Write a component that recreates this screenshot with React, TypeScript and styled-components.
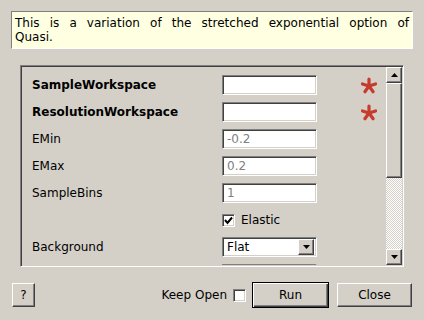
import styled, { createGlobalStyle } from "styled-components";

const GlobalStyle = createGlobalStyle`
  html, body {
    margin: 0;
    padding: 0;
    background: #d4d0c8;
  }
  body {
    font-family: "DejaVu Sans", "Liberation Sans", sans-serif;
    font-size: 12px;
    color: #000;
  }
`;

const Dialog = styled.div`
  width: 424px;
  height: 320px;
  display: flex;
  flex-direction: column;
  background: #d4d0c8;
  overflow: hidden;
`;

const Description = styled.div`
  margin: 11px 11px 0;
  height: 38px;
  box-sizing: border-box;
  padding: 4px 3px 0 3px;
  background: #ffffe1;
  border: 1px solid;
  border-color: #808080 #ffffff #ffffff #808080;
  line-height: 14px;
  text-align: justify;
`;

const LastLine = styled.span`
  display: inline-block;
  width: 100%;
`;

const Frame = styled.div`
  margin: 16px 20px 0;
  height: 202px;
  box-sizing: border-box;
  border: 1px solid;
  border-color: #808080 #ffffff #ffffff #808080;
  box-shadow: inset 1px 1px #404040, inset -1px -1px #d4d0c8;
  padding: 1px;
  display: flex;
  overflow: hidden;
`;

const Form = styled.div`
  flex: 1;
  display: grid;
  grid-template-columns: 190px 95px 1fr;
  grid-auto-rows: 20px;
  row-gap: 7px;
  align-items: center;
  padding: 8px 0 0 10px;
  overflow: hidden;
`;

const Label = styled.span<{ $bold?: boolean }>`
  font-weight: ${(p) => (p.$bold ? "bold" : "normal")};
  white-space: nowrap;
`;

const sunken = `
  border: 1px solid;
  border-color: #808080 #ffffff #ffffff #808080;
  box-shadow: inset 1px 1px #404040, inset -1px -1px #d4d0c8;
`;

const Input = styled.div<{ $muted?: boolean }>`
  ${sunken}
  box-sizing: border-box;
  height: 20px;
  width: 95px;
  background: #fff;
  padding: 0 4px;
  display: flex;
  align-items: center;
  color: ${(p) => (p.$muted ? "#808080" : "#000")};
`;

const Combo = styled(Input)`
  padding: 2px 2px 2px 4px;
  justify-content: space-between;
`;

const raised = `
  border: 1px solid;
  border-color: #ffffff #404040 #404040 #ffffff;
  box-shadow: inset -1px -1px #808080, inset 1px 1px #d4d0c8;
  background: #d4d0c8;
`;

const ArrowButton = styled.div`
  ${raised}
  box-sizing: border-box;
  width: 16px;
  height: 16px;
  display: flex;
  align-items: center;
  justify-content: center;
  flex-shrink: 0;
  margin-left: auto;
`;

const Star = styled.svg`
  justify-self: end;
  margin-right: 9px;
`;

const CheckRow = styled.label`
  display: flex;
  align-items: center;
  gap: 6px;
`;

const Box = styled.span`
  ${sunken}
  box-sizing: border-box;
  width: 13px;
  height: 13px;
  background: #fff;
  display: inline-flex;
  align-items: center;
  justify-content: center;
`;

const ScrollBar = styled.div`
  width: 16px;
  display: flex;
  flex-direction: column;
  flex-shrink: 0;
`;

const Thumb = styled.div`
  ${raised}
  box-sizing: border-box;
  height: 95px;
`;

const Trough = styled.div`
  flex: 1;
  background-image: conic-gradient(#ffffff 25%, #d4d0c8 0 50%, #ffffff 0 75%, #d4d0c8 0);
  background-size: 2px 2px;
`;

const Footer = styled.div`
  margin-top: 15px;
  padding: 0 12px;
  height: 26px;
  display: flex;
  align-items: center;
`;

const Button = styled.button<{ $w: number; $default?: boolean }>`
  ${raised}
  box-sizing: border-box;
  width: ${(p) => p.$w}px;
  height: ${(p) => (p.$default ? 26 : 24)}px;
  font: inherit;
  color: #000;
  padding: 0;
  ${(p) =>
    p.$default &&
    `
    border-color: #000;
    box-shadow: inset 1px 1px #ffffff, inset -1px -1px #404040, inset -2px -2px #808080;
  `}
`;

const KeepOpen = styled.label`
  margin-left: auto;
  margin-right: 6px;
  display: flex;
  align-items: center;
  gap: 6px;
`;

const Spacer = styled.div`
  width: 8px;
`;

const Arrow = ({ up }: { up?: boolean }) => (
  <svg width="7" height="4" viewBox="0 0 7 4">
    <polygon points={up ? "0,4 7,4 3.5,0" : "0,0 7,0 3.5,4"} fill="#000" />
  </svg>
);

const Asterisk = () => (
  <Star width="16" height="17" viewBox="0 0 16 17">
    <g stroke="#c63b2c" strokeWidth="3.2" strokeLinecap="round">
      <line x1="8" y1="9" x2="8" y2="2" />
      <line x1="8" y1="9" x2="14.6" y2="6.9" />
      <line x1="8" y1="9" x2="1.4" y2="6.9" />
      <line x1="8" y1="9" x2="12.1" y2="14.7" />
      <line x1="8" y1="9" x2="3.9" y2="14.7" />
    </g>
  </Star>
);

function App() {
  return (
    <Dialog>
      <GlobalStyle />
      <Description>
        This is a variation of the stretched exponential option of{" "}
        <LastLine>Quasi.</LastLine>
      </Description>
      <Frame>
        <Form>
          <Label $bold>SampleWorkspace</Label>
          <Input />
          <Asterisk />

          <Label $bold>ResolutionWorkspace</Label>
          <Input />
          <Asterisk />

          <Label>EMin</Label>
          <Input $muted>-0.2</Input>
          <span />

          <Label>EMax</Label>
          <Input $muted>0.2</Input>
          <span />

          <Label>SampleBins</Label>
          <Input $muted>1</Input>
          <span />

          <span />
          <CheckRow>
            <Box>
              <svg width="9" height="9" viewBox="0 0 9 9">
                <polyline points="1,4 3.5,7 8,1.5" fill="none" stroke="#000" strokeWidth="2" />
              </svg>
            </Box>
            Elastic
          </CheckRow>
          <span />

          <Label>Background</Label>
          <Combo>
            Flat
            <ArrowButton>
              <Arrow />
            </ArrowButton>
          </Combo>
          <span />

          <span />
          <Combo>
            <ArrowButton>
              <Arrow />
            </ArrowButton>
          </Combo>
          <span />
        </Form>
        <ScrollBar>
          <ArrowButton>
            <Arrow up />
          </ArrowButton>
          <Thumb />
          <Trough />
          <ArrowButton>
            <Arrow />
          </ArrowButton>
        </ScrollBar>
      </Frame>
      <Footer>
        <Button $w={23}>?</Button>
        <KeepOpen>
          Keep Open
          <Box />
        </KeepOpen>
        <Button $w={77} $default>
          Run
        </Button>
        <Spacer />
        <Button $w={75}>Close</Button>
      </Footer>
    </Dialog>
  );
}

export default App;
